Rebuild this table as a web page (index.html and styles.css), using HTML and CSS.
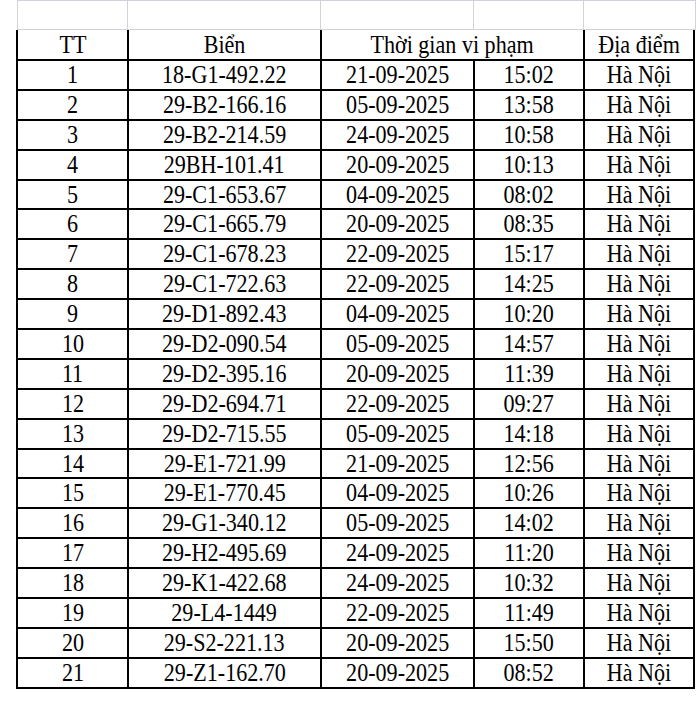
FILE: index.html
```html
<!DOCTYPE html>
<html lang="vi">
<head>
<meta charset="utf-8">
<title>Danh sách vi phạm</title>
<link rel="stylesheet" href="styles.css">
</head>
<body>
<div class="grid">
  <div class="gc"></div><div class="gc"></div><div class="gc"></div><div class="gc"></div><div class="gc"></div>
</div>
<table class="tbl">
  <colgroup>
    <col class="c1"><col class="c2"><col class="c3"><col class="c4"><col class="c5">
  </colgroup>
  <thead>
    <tr class="hr">
      <th><span class="t">TT</span></th>
      <th><span class="t">Biển</span></th>
      <th colspan="2"><span class="t">Thời gian vi phạm</span></th>
      <th><span class="t">Địa điểm</span></th>
    </tr>
  </thead>
  <tbody>
    <tr><td><span class="t">1</span></td><td><span class="t">18-G1-492.22</span></td><td><span class="t">21-09-2025</span></td><td><span class="t">15:02</span></td><td><span class="t">Hà Nội</span></td></tr>
    <tr><td><span class="t">2</span></td><td><span class="t">29-B2-166.16</span></td><td><span class="t">05-09-2025</span></td><td><span class="t">13:58</span></td><td><span class="t">Hà Nội</span></td></tr>
    <tr><td><span class="t">3</span></td><td><span class="t">29-B2-214.59</span></td><td><span class="t">24-09-2025</span></td><td><span class="t">10:58</span></td><td><span class="t">Hà Nội</span></td></tr>
    <tr><td><span class="t">4</span></td><td><span class="t">29BH-101.41</span></td><td><span class="t">20-09-2025</span></td><td><span class="t">10:13</span></td><td><span class="t">Hà Nội</span></td></tr>
    <tr><td><span class="t">5</span></td><td><span class="t">29-C1-653.67</span></td><td><span class="t">04-09-2025</span></td><td><span class="t">08:02</span></td><td><span class="t">Hà Nội</span></td></tr>
    <tr><td><span class="t">6</span></td><td><span class="t">29-C1-665.79</span></td><td><span class="t">20-09-2025</span></td><td><span class="t">08:35</span></td><td><span class="t">Hà Nội</span></td></tr>
    <tr><td><span class="t">7</span></td><td><span class="t">29-C1-678.23</span></td><td><span class="t">22-09-2025</span></td><td><span class="t">15:17</span></td><td><span class="t">Hà Nội</span></td></tr>
    <tr><td><span class="t">8</span></td><td><span class="t">29-C1-722.63</span></td><td><span class="t">22-09-2025</span></td><td><span class="t">14:25</span></td><td><span class="t">Hà Nội</span></td></tr>
    <tr><td><span class="t">9</span></td><td><span class="t">29-D1-892.43</span></td><td><span class="t">04-09-2025</span></td><td><span class="t">10:20</span></td><td><span class="t">Hà Nội</span></td></tr>
    <tr><td><span class="t">10</span></td><td><span class="t">29-D2-090.54</span></td><td><span class="t">05-09-2025</span></td><td><span class="t">14:57</span></td><td><span class="t">Hà Nội</span></td></tr>
    <tr><td><span class="t">11</span></td><td><span class="t">29-D2-395.16</span></td><td><span class="t">20-09-2025</span></td><td><span class="t">11:39</span></td><td><span class="t">Hà Nội</span></td></tr>
    <tr><td><span class="t">12</span></td><td><span class="t">29-D2-694.71</span></td><td><span class="t">22-09-2025</span></td><td><span class="t">09:27</span></td><td><span class="t">Hà Nội</span></td></tr>
    <tr><td><span class="t">13</span></td><td><span class="t">29-D2-715.55</span></td><td><span class="t">05-09-2025</span></td><td><span class="t">14:18</span></td><td><span class="t">Hà Nội</span></td></tr>
    <tr><td><span class="t">14</span></td><td><span class="t">29-E1-721.99</span></td><td><span class="t">21-09-2025</span></td><td><span class="t">12:56</span></td><td><span class="t">Hà Nội</span></td></tr>
    <tr><td><span class="t">15</span></td><td><span class="t">29-E1-770.45</span></td><td><span class="t">04-09-2025</span></td><td><span class="t">10:26</span></td><td><span class="t">Hà Nội</span></td></tr>
    <tr><td><span class="t">16</span></td><td><span class="t">29-G1-340.12</span></td><td><span class="t">05-09-2025</span></td><td><span class="t">14:02</span></td><td><span class="t">Hà Nội</span></td></tr>
    <tr><td><span class="t">17</span></td><td><span class="t">29-H2-495.69</span></td><td><span class="t">24-09-2025</span></td><td><span class="t">11:20</span></td><td><span class="t">Hà Nội</span></td></tr>
    <tr><td><span class="t">18</span></td><td><span class="t">29-K1-422.68</span></td><td><span class="t">24-09-2025</span></td><td><span class="t">10:32</span></td><td><span class="t">Hà Nội</span></td></tr>
    <tr><td><span class="t">19</span></td><td><span class="t">29-L4-1449</span></td><td><span class="t">22-09-2025</span></td><td><span class="t">11:49</span></td><td><span class="t">Hà Nội</span></td></tr>
    <tr><td><span class="t">20</span></td><td><span class="t">29-S2-221.13</span></td><td><span class="t">20-09-2025</span></td><td><span class="t">15:50</span></td><td><span class="t">Hà Nội</span></td></tr>
    <tr><td><span class="t">21</span></td><td><span class="t">29-Z1-162.70</span></td><td><span class="t">20-09-2025</span></td><td><span class="t">08:52</span></td><td><span class="t">Hà Nội</span></td></tr>
  </tbody>
</table>
</body>
</html>
```

FILE: styles.css
```css
html, body {
  margin: 0;
  padding: 0;
  background: #ffffff;
}

body {
  font-family: "Liberation Serif", "Times New Roman", serif;
  color: #000000;
}

.grid {
  display: grid;
  grid-template-columns: 110px 193px 153px 110px 112px;
  width: 679px;
  height: 30px;
  margin-left: 17px;
  box-sizing: border-box;
  border-top: 1px solid #d2d2dc;
  border-left: 1px solid #d2d2dc;
}

.gc {
  border-right: 1px solid #d2d2dc;
  border-bottom: 1px solid #d2d2dc;
}

.tbl {
  border-collapse: collapse;
  table-layout: fixed;
  width: 677px;
  margin-left: 16px;
  border: 2px solid #000000;
  border-top: 0;
}

.c1 { width: 111px; }
.c2 { width: 193px; }
.c3 { width: 153px; }
.c4 { width: 110px; }
.c5 { width: 110px; }

.tbl tr {
  height: 29.9px;
}

.tbl .hr {
  height: 30px;
}

.tbl th,
.tbl td {
  border: 2px solid #000000;
  padding: 0;
  text-align: center;
  vertical-align: middle;
  font-size: 26px;
  font-weight: normal;
  line-height: 26px;
  white-space: nowrap;
}

.tbl th {
  border-top: 0;
}

.t {
  display: inline-block;
  transform: scaleX(0.85);
}
```
